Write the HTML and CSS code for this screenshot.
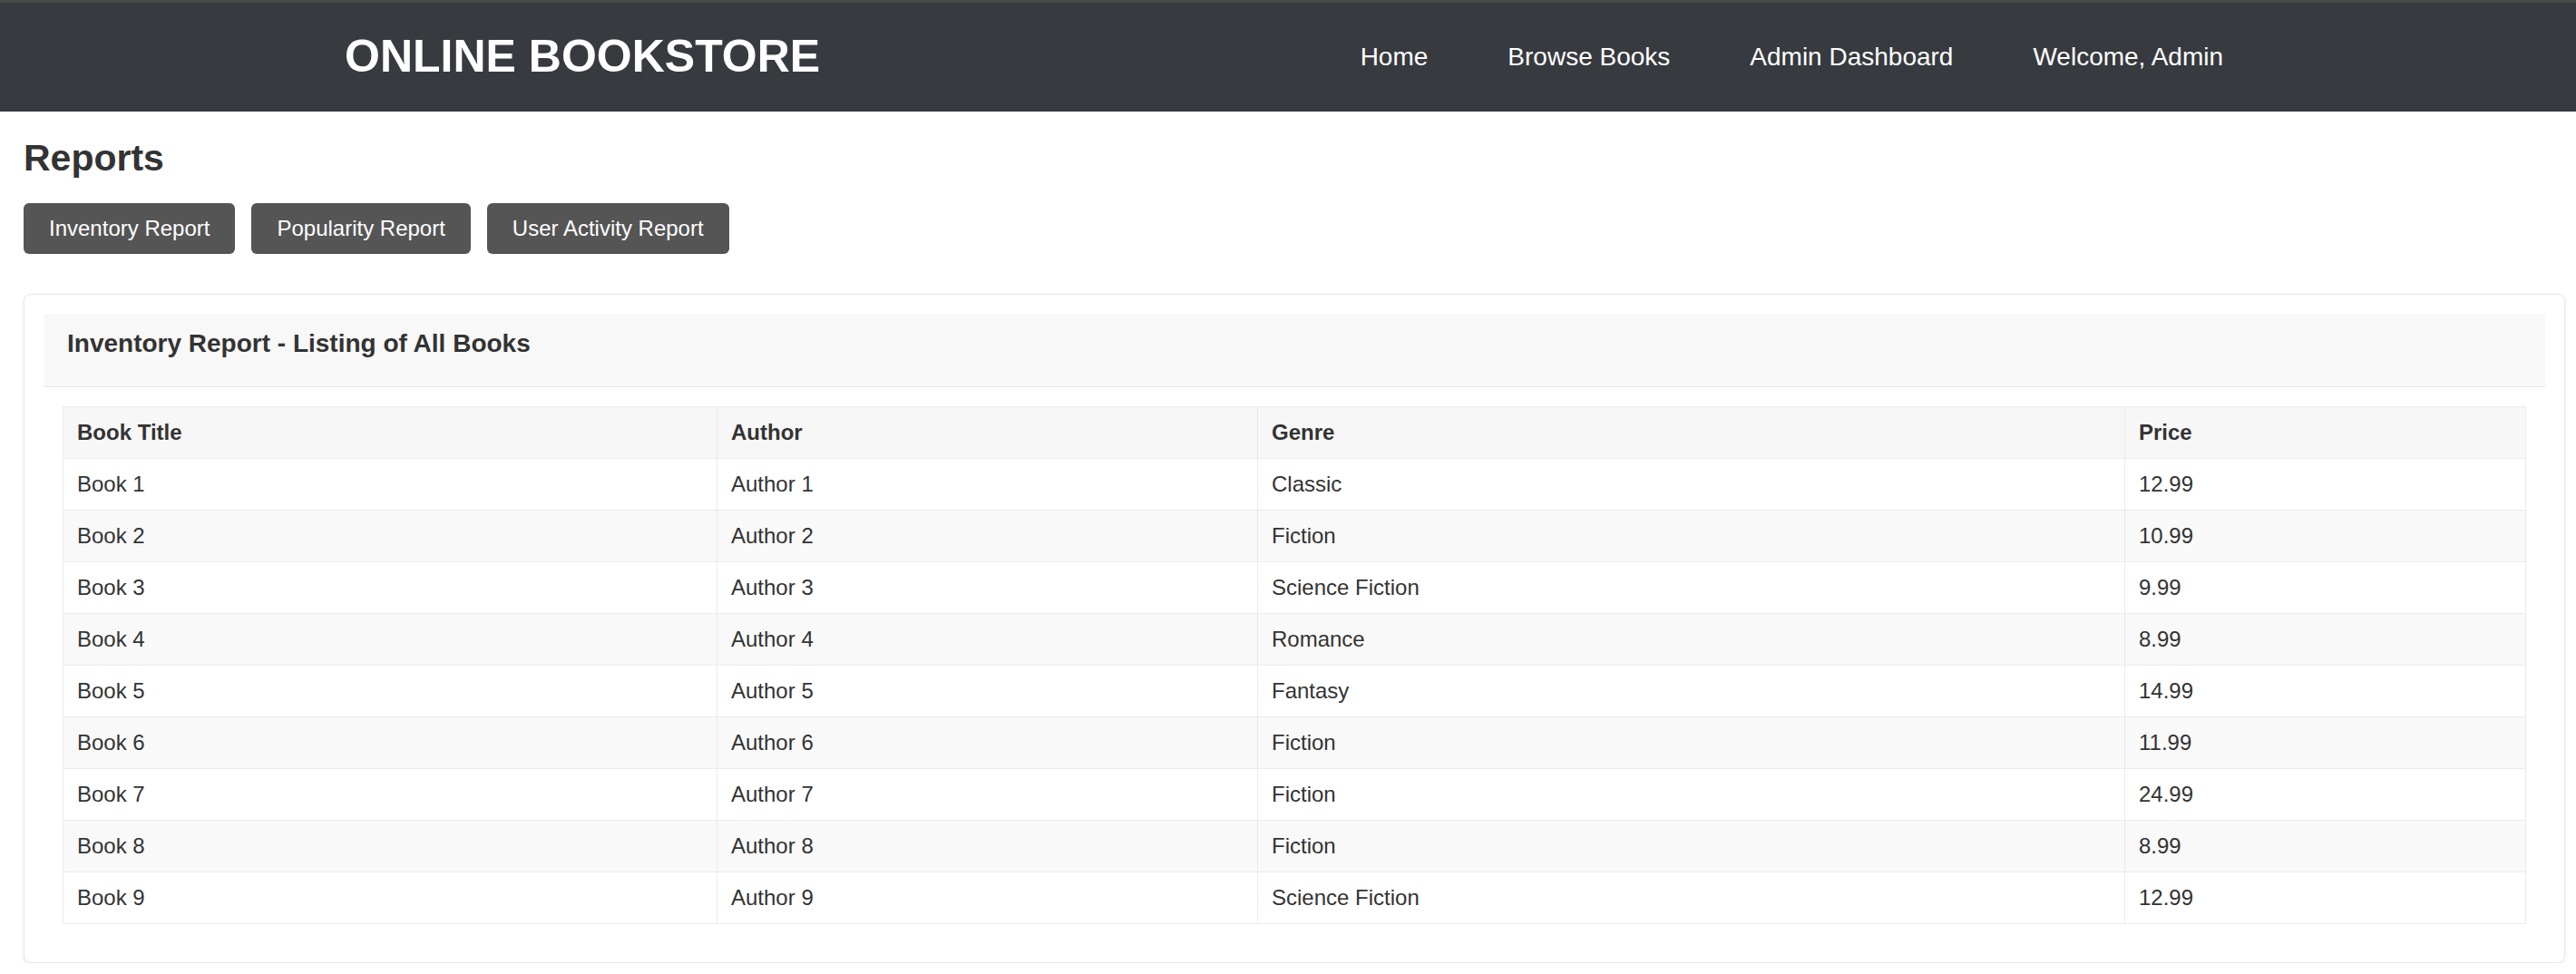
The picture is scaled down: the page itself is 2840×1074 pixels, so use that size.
FILE: index.html
```html
<!DOCTYPE html>
<html lang="en">
<head>
<meta charset="utf-8">
<title>Online Bookstore - Reports</title>
<link rel="stylesheet" href="styles.css">
</head>
<body>
<header class="site-header">
  <div class="brand">ONLINE BOOKSTORE</div>
  <nav class="nav">
    <a class="nav-link" href="#">Home</a>
    <a class="nav-link" href="#">Browse Books</a>
    <a class="nav-link" href="#">Admin Dashboard</a>
    <span class="nav-link">Welcome, Admin</span>
  </nav>
</header>
<main class="main">
  <h2 class="page-title">Reports</h2>
  <div class="btn-row">
    <button class="btn">Inventory Report</button>
    <button class="btn">Popularity Report</button>
    <button class="btn">User Activity Report</button>
  </div>
  <section class="card">
    <div class="card-header">
      <h3 class="card-title">Inventory Report - Listing of All Books</h3>
    </div>
    <div class="card-body">
      <table class="report-table">
        <colgroup>
          <col class="col-title">
          <col class="col-author">
          <col class="col-genre">
          <col class="col-price">
        </colgroup>
        <thead>
          <tr><th>Book Title</th><th>Author</th><th>Genre</th><th>Price</th></tr>
        </thead>
        <tbody>
          <tr><td>Book 1</td><td>Author 1</td><td>Classic</td><td>12.99</td></tr>
          <tr><td>Book 2</td><td>Author 2</td><td>Fiction</td><td>10.99</td></tr>
          <tr><td>Book 3</td><td>Author 3</td><td>Science Fiction</td><td>9.99</td></tr>
          <tr><td>Book 4</td><td>Author 4</td><td>Romance</td><td>8.99</td></tr>
          <tr><td>Book 5</td><td>Author 5</td><td>Fantasy</td><td>14.99</td></tr>
          <tr><td>Book 6</td><td>Author 6</td><td>Fiction</td><td>11.99</td></tr>
          <tr><td>Book 7</td><td>Author 7</td><td>Fiction</td><td>24.99</td></tr>
          <tr><td>Book 8</td><td>Author 8</td><td>Fiction</td><td>8.99</td></tr>
          <tr><td>Book 9</td><td>Author 9</td><td>Science Fiction</td><td>12.99</td></tr>
        </tbody>
      </table>
    </div>
  </section>
</main>
</body>
</html>
```
FILE: styles.css
```css
* { box-sizing: border-box; }

html, body {
  margin: 0;
  padding: 0;
  background: #ffffff;
  font-family: "Liberation Sans", Arial, sans-serif;
  color: #333333;
}

.site-header {
  height: 123px;
  border-top: 3px solid #4b4b4b;
  background: #373a3f;
  display: flex;
  align-items: center;
  justify-content: space-between;
  padding: 0 389px 0 380px;
}

.brand {
  color: #ffffff;
  font-size: 50px;
  font-weight: bold;
  line-height: 1.15;
}

.nav {
  display: flex;
  align-items: center;
  gap: 88px;
}

.nav-link {
  color: #ffffff;
  font-size: 28px;
  text-decoration: none;
  line-height: 1.15;
}

.main {
  padding: 0 12px 0 26px;
}

.page-title {
  margin: 28px 0 0;
  font-size: 41px;
  font-weight: bold;
  line-height: 47px;
  color: #333333;
}

.btn-row {
  display: flex;
  gap: 18px;
  margin-top: 26px;
}

.btn {
  font-family: "Liberation Sans", Arial, sans-serif;
  font-size: 24px;
  line-height: 28px;
  padding: 14px 28px;
  border: none;
  border-radius: 6px;
  background: #555555;
  color: #ffffff;
}

.card {
  margin-top: 44px;
  border: 1px solid #e8e8e8;
  border-radius: 8px;
  box-shadow: 0 2px 4px rgba(0, 0, 0, 0.08);
  padding: 21px;
  background: #ffffff;
}

.card-header {
  background: #f8f8f8;
  border-bottom: 1px solid #e6e6e6;
  padding: 17px 26px 31px;
}

.card-title {
  margin: 0;
  font-size: 28px;
  font-weight: bold;
  line-height: 32px;
  color: #333333;
}

.card-body {
  padding: 21px;
}

.report-table {
  width: 100%;
  border-collapse: collapse;
  table-layout: fixed;
  border: 1px solid #e8e8e8;
  font-size: 24px;
}

.col-title { width: 721px; }
.col-author { width: 596px; }
.col-genre { width: 956px; }

.report-table th,
.report-table td {
  border: 1px solid #ebebeb;
  padding: 14px 15px;
  line-height: 28px;
  text-align: left;
  color: #333333;
}

.report-table th {
  font-weight: bold;
  background: #f7f7f7;
}

.report-table tbody tr:nth-child(even) td {
  background: #f9f9f9;
}
```
